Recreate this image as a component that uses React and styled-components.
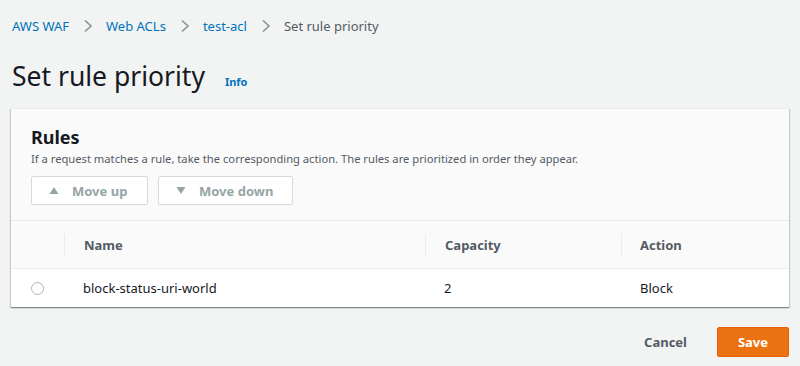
import React from "react";
import styled, { createGlobalStyle } from "styled-components";

const Global = createGlobalStyle`
  html, body { margin: 0; padding: 0; background: #f2f3f3; }
  body { font-family: "Noto Sans", "Open Sans", sans-serif; color: #16191f; }
  * { box-sizing: border-box; }
`;

const Page = styled.div`
  width: 800px;
  height: 366px;
  padding: 0 11px 0 11px;
  display: flex;
  flex-direction: column;
`;

const Breadcrumbs = styled.nav`
  display: flex;
  align-items: center;
  height: 52px;
  padding-left: 1px;
  font-size: 13px;
`;

const Crumb = styled.a`
  color: ${(p) => (p.$current ? "#545b64" : "#0073bb")};
  text-decoration: none;
`;

const Chevron = styled.svg`
  width: 10px;
  height: 14px;
  margin: 0 13px 0 14px;
`;

const TitleRow = styled.div`
  display: flex;
  align-items: baseline;
  height: 56px;
  padding-left: 1px;
  padding-top: 7px;
`;

const Title = styled.h1`
  margin: 0;
  font-size: 26.5px;
  font-weight: 400;
  line-height: 34px;
  color: #16191f;
`;

const Info = styled.a`
  margin-left: 20px;
  font-size: 11px;
  font-weight: 700;
  color: #0073bb;
`;

const Panel = styled.section`
  background: #fff;
  box-shadow: 0 1px 1px 0 rgba(0, 28, 36, 0.3), 1px 1px 1px 0 rgba(0, 28, 36, 0.15),
    -1px 1px 1px 0 rgba(0, 28, 36, 0.15);
  border-top: 1px solid #eaeded;
`;

const PanelHeader = styled.header`
  background: #fafafa;
  padding: 15px 20px 15px 20px;
  border-bottom: 1px solid #eaeded;
`;

const PanelTitle = styled.h2`
  margin: 0;
  font-size: 18px;
  font-weight: 700;
  line-height: 26px;
`;

const Desc = styled.p`
  margin: 0;
  font-size: 11.2px;
  line-height: 18px;
  color: #545b64;
`;

const Actions = styled.div`
  display: flex;
  gap: 10px;
  margin-top: 8px;
`;

const GhostButton = styled.button`
  display: flex;
  align-items: center;
  height: 29px;
  width: ${(p) => p.$w}px;
  padding: 0 0 0 17px;
  gap: 13px;
  border: 1px solid #d5dbdb;
  border-radius: 2px;
  background: #fff;
  color: #95a5a6;
  font-family: inherit;
  font-size: 13px;
  font-weight: 700;
`;

const Table = styled.div`
  display: grid;
  grid-template-columns: 53px 361px 196px 1fr;
`;

const HeadCell = styled.div`
  height: 48px;
  background: #fafafa;
  border-bottom: 1px solid #eaeded;
  display: flex;
  align-items: center;
  font-size: 13px;
  font-weight: 700;
  color: #545b64;
  position: relative;
  padding-left: ${(p) => p.$pad || 20}px;
  ${(p) =>
    p.$sep &&
    `&::before { content: ""; position: absolute; left: 0; top: 13px; bottom: 12px; border-left: 1px solid #eaeded; }`}
`;

const Cell = styled.div`
  height: 38px;
  display: flex;
  align-items: center;
  font-size: 13px;
  color: #16191f;
  padding-left: ${(p) => p.$pad || 19}px;
`;

const Radio = styled.span`
  width: 13px;
  height: 13px;
  border: 1px solid #aab7b8;
  border-radius: 50%;
  background: #fff;
`;

const Footer = styled.div`
  display: flex;
  justify-content: flex-end;
  align-items: center;
  gap: 30px;
  margin-top: 20px;
`;

const LinkButton = styled.button`
  border: none;
  background: none;
  font-family: inherit;
  font-size: 13px;
  font-weight: 700;
  color: #545b64;
  padding: 0;
`;

const PrimaryButton = styled.button`
  height: 30px;
  width: 72px;
  border: 1px solid #eb5f07;
  border-radius: 2px;
  background: #ec7211;
  color: #fff;
  font-family: inherit;
  font-size: 13px;
  font-weight: 700;
`;

const Chev = () => (
  <Chevron viewBox="0 0 10 14">
    <path d="M2 1.5 L8 7 L2 12.5" fill="none" stroke="#879596" strokeWidth="1.6" />
  </Chevron>
);

const Tri = ({ up }) => (
  <svg width="10" height="9" viewBox="0 0 10 9">
    <path d={up ? "M5 1 L9.5 8 L0.5 8 Z" : "M0.5 1 L9.5 1 L5 8 Z"} fill="#95a5a6" />
  </svg>
);

export default function App() {
  return (
    <>
      <Global />
      <Page>
        <Breadcrumbs>
          <Crumb>AWS WAF</Crumb>
          <Chev />
          <Crumb>Web ACLs</Crumb>
          <Chev />
          <Crumb>test-acl</Crumb>
          <Chev />
          <Crumb $current>Set rule priority</Crumb>
        </Breadcrumbs>
        <TitleRow>
          <Title>Set rule priority</Title>
          <Info>Info</Info>
        </TitleRow>
        <Panel>
          <PanelHeader>
            <PanelTitle>Rules</PanelTitle>
            <Desc>
              If a request matches a rule, take the corresponding action. The rules are prioritized in order they appear.
            </Desc>
            <Actions>
              <GhostButton $w={117}>
                <Tri up />
                Move up
              </GhostButton>
              <GhostButton $w={135}>
                <Tri />
                Move down
              </GhostButton>
            </Actions>
          </PanelHeader>
          <Table>
            <HeadCell />
            <HeadCell $sep>Name</HeadCell>
            <HeadCell $sep>Capacity</HeadCell>
            <HeadCell $sep $pad={19}>Action</HeadCell>
            <Cell $pad={20}>
              <Radio />
            </Cell>
            <Cell>block-status-uri-world</Cell>
            <Cell>2</Cell>
            <Cell>Block</Cell>
          </Table>
        </Panel>
        <Footer>
          <LinkButton>Cancel</LinkButton>
          <PrimaryButton>Save</PrimaryButton>
        </Footer>
      </Page>
    </>
  );
}
